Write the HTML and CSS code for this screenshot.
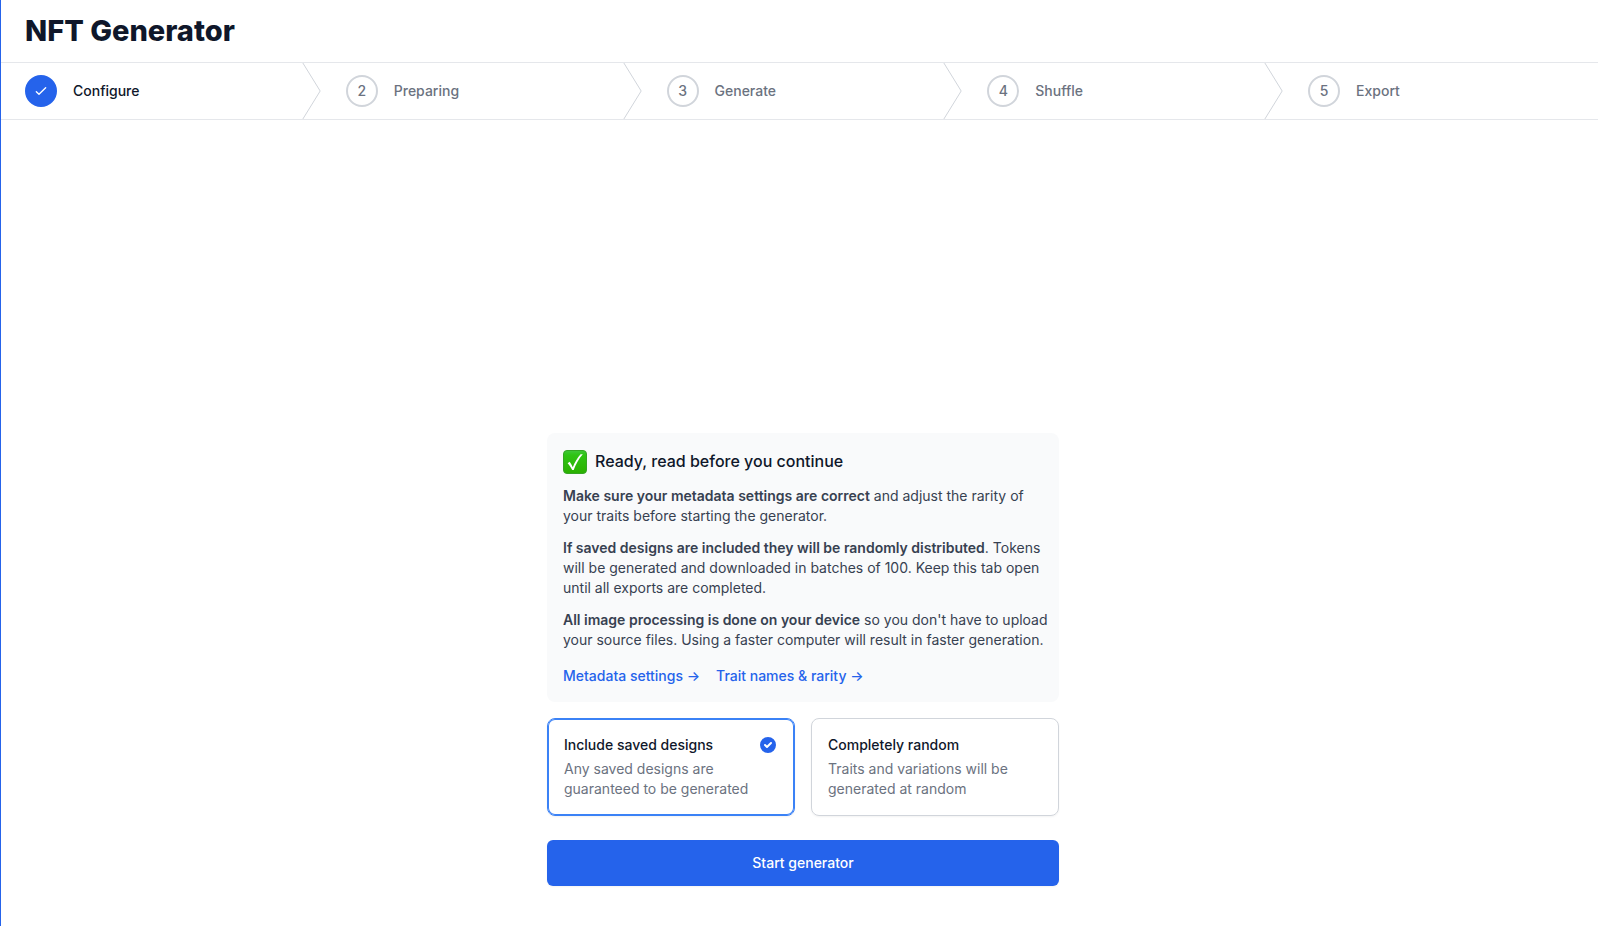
FILE: index.html
```html
<!DOCTYPE html>
<html lang="en">
<head>
    <meta charset="UTF-8">
    <meta name="viewport" content="width=device-width, initial-scale=1">
    <title>NFT Generator</title>
    <link rel="stylesheet" href="styles.css">
</head>
<body>
    <header class="header">
        <h1>NFT Generator</h1>
    </header>

    <nav aria-label="Progress">
        <ol class="steps">
            <li class="step done">
                <a href="#configure">
                    <span class="step-circle">
                        <svg width="16" height="16" viewBox="0 0 24 24" fill="none" stroke="currentColor" stroke-width="2" stroke-linecap="round" stroke-linejoin="round"><path d="M5 13l4 4L19 7"/></svg>
                    </span>
                    <span>Configure</span>
                </a>
                <svg class="chevron" viewBox="0 0 22 80" fill="none" preserveAspectRatio="none"><path d="M0 -2L20 40L0 82" stroke="currentColor" vector-effect="non-scaling-stroke" stroke-linejoin="round"/></svg>
            </li>
            <li class="step">
                <a href="#preparing"><span class="step-circle">2</span><span>Preparing</span></a>
                <svg class="chevron" viewBox="0 0 22 80" fill="none" preserveAspectRatio="none"><path d="M0 -2L20 40L0 82" stroke="currentColor" vector-effect="non-scaling-stroke" stroke-linejoin="round"/></svg>
            </li>
            <li class="step">
                <a href="#generate"><span class="step-circle">3</span><span>Generate</span></a>
                <svg class="chevron" viewBox="0 0 22 80" fill="none" preserveAspectRatio="none"><path d="M0 -2L20 40L0 82" stroke="currentColor" vector-effect="non-scaling-stroke" stroke-linejoin="round"/></svg>
            </li>
            <li class="step">
                <a href="#shuffle"><span class="step-circle">4</span><span>Shuffle</span></a>
                <svg class="chevron" viewBox="0 0 22 80" fill="none" preserveAspectRatio="none"><path d="M0 -2L20 40L0 82" stroke="currentColor" vector-effect="non-scaling-stroke" stroke-linejoin="round"/></svg>
            </li>
            <li class="step">
                <a href="#export"><span class="step-circle">5</span><span>Export</span></a>
            </li>
        </ol>
    </nav>

    <main class="main">
        <form class="generator">
            <section class="notice">
                <h2>
                    <svg width="24" height="24" viewBox="0 0 24 24" aria-hidden="true">
                        <defs>
                            <linearGradient id="check-green" x1="0" y1="0" x2="0" y2="1">
                                <stop offset="0" stop-color="#3fc83a"/>
                                <stop offset="0.2" stop-color="#2fc414"/>
                                <stop offset="1" stop-color="#2bb000"/>
                            </linearGradient>
                        </defs>
                        <rect x="0.5" y="0.5" width="23" height="23" rx="3.5" fill="url(#check-green)" stroke="#35a524"/>
                        <path d="M4.6 13.2 L6.7 11.8 C8 13.6 9 15.4 9.8 17.2 C11.8 12.2 14.4 7.8 17.6 4.2 L19.8 4.2 C15.8 8.8 12.8 14.2 10.7 20 L9.2 20 C8 17.4 6.4 15.2 4.6 13.2 Z" fill="#fff"/>
                    </svg>
                    Ready, read before you continue
                </h2>
                <p><strong>Make sure your metadata settings are correct</strong> and adjust the rarity of your traits before starting the generator.</p>
                <p><strong>If saved designs are included they will be randomly distributed</strong>. Tokens will be generated and downloaded in batches of 100. Keep this tab open until all exports are completed.</p>
                <p><strong>All image processing is done on your device</strong> so you don't have to upload your source files. Using a faster computer will result in faster generation.</p>
                <div class="notice-links">
                    <a href="#metadata">Metadata settings →</a>
                    <a href="#traits">Trait names &amp; rarity →</a>
                </div>
            </section>

            <div class="options" role="radiogroup" aria-label="Generation mode">
                <label class="option">
                    <input type="radio" name="mode" value="saved" checked>
                    <span class="option-title">
                        Include saved designs
                        <svg class="option-check" width="20" height="20" viewBox="0 0 20 20" fill="currentColor"><path fill-rule="evenodd" d="M10 18a8 8 0 100-16 8 8 0 000 16zm3.707-9.293a1 1 0 00-1.414-1.414L9 10.586 7.707 9.293a1 1 0 00-1.414 1.414l2 2a1 1 0 001.414 0l4-4z" clip-rule="evenodd"/></svg>
                    </span>
                    <span class="option-text">Any saved designs are guaranteed to be generated</span>
                </label>
                <label class="option">
                    <input type="radio" name="mode" value="random">
                    <span class="option-title">
                        Completely random
                        <svg class="option-check" width="20" height="20" viewBox="0 0 20 20" fill="currentColor"><path fill-rule="evenodd" d="M10 18a8 8 0 100-16 8 8 0 000 16zm3.707-9.293a1 1 0 00-1.414-1.414L9 10.586 7.707 9.293a1 1 0 00-1.414 1.414l2 2a1 1 0 001.414 0l4-4z" clip-rule="evenodd"/></svg>
                    </span>
                    <span class="option-text">Traits and variations will be generated at random</span>
                </label>
            </div>

            <button type="button" class="start-btn">Start generator</button>
        </form>
    </main>
</body>
</html>
```
FILE: styles.css
```css
* {
    box-sizing: border-box;
    margin: 0;
    padding: 0;
}
body {
    display: flex;
    flex-direction: column;
    min-height: 100vh;
    border-left: 1px solid #2563eb;
    background: #fff;
    color: #0f172a;
    font-family: Inter, sans-serif;
    font-size: 14px;
    line-height: 20px;
}
a {
    text-decoration: none;
}

/* Header */
.header {
    padding: 13px 24px;
}
.header h1 {
    font-size: 29px;
    line-height: 36px;
    font-weight: 800;
}

/* Steps */
.steps {
    display: grid;
    grid-template-columns: repeat(4, 47fr) 46fr;
    border-top: 1px solid #e5e7eb;
    border-bottom: 1px solid #e5e7eb;
    list-style: none;
}
.step {
    display: flex;
    justify-content: space-between;
    height: 56px;
}
.step a {
    display: flex;
    align-items: center;
    gap: 16px;
    padding-left: 24px;
    color: #6b7280;
    font-weight: 500;
}
.step-circle {
    display: flex;
    align-items: center;
    justify-content: center;
    width: 32px;
    height: 32px;
    border: 2px solid #d1d5db;
    border-radius: 50%;
}
.step.done a {
    color: #0f172a;
}
.step.done .step-circle {
    background: #2563eb;
    border-color: #2563eb;
    color: #fff;
}
.chevron {
    width: 20px;
    height: 100%;
    color: #d1d5db;
}

/* Content */
.main {
    flex: 1;
    display: flex;
    align-items: flex-end;
    justify-content: center;
    padding: 40px 0 40px 7px;
}
.generator {
    width: 100%;
    max-width: 512px;
}
.notice {
    padding: 16px 8px 16px 16px;
    border-radius: 8px;
    background: #f9fafb;
    color: #374151;
}
.notice h2 {
    display: flex;
    align-items: center;
    gap: 8px;
    color: #0f172a;
    font-size: 16px;
    line-height: 25px;
    font-weight: 500;
}
.notice p {
    margin-top: 12px;
}
.notice strong {
    font-weight: 600;
}
.notice-links {
    display: flex;
    gap: 16px;
    margin-top: 16px;
}
.notice-links a {
    color: #2563eb;
    font-weight: 500;
}

/* Options */
.options {
    display: grid;
    grid-template-columns: 1fr 1fr;
    gap: 16px;
    margin-top: 16px;
}
.option {
    position: relative;
    padding: 16px;
    border: 1px solid #d1d5db;
    border-radius: 8px;
    box-shadow: 0 1px 2px rgba(0, 0, 0, 0.05);
    cursor: pointer;
}
.option input {
    position: absolute;
    opacity: 0;
}
.option:has(input:checked) {
    border-color: #3b82f6;
    box-shadow: inset 0 0 0 1px #3b82f6, 0 1px 2px rgba(0, 0, 0, 0.05);
}
.option-title {
    display: flex;
    justify-content: space-between;
    font-weight: 500;
}
.option-text {
    display: block;
    margin-top: 4px;
    color: #6b7280;
}
.option-check {
    visibility: hidden;
    color: #2563eb;
}
.option input:checked + .option-title .option-check {
    visibility: visible;
}

.start-btn {
    display: block;
    width: 100%;
    margin-top: 24px;
    padding: 12px;
    border: 1px solid transparent;
    border-radius: 6px;
    background: #2563eb;
    box-shadow: 0 1px 2px rgba(0, 0, 0, 0.05);
    color: #fff;
    font: inherit;
    font-weight: 500;
    cursor: pointer;
}
.start-btn:hover {
    background: #1d4ed8;
}
```
